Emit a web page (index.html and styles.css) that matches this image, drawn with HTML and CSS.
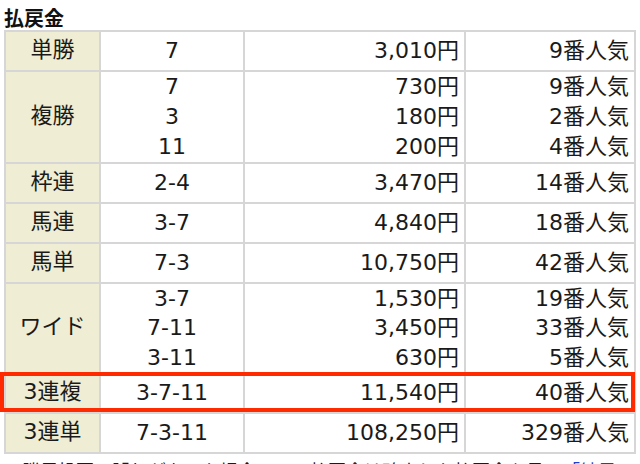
FILE: index.html
```html
<!DOCTYPE html>
<html lang="ja">
<head>
<meta charset="utf-8">
<title>払戻金</title>
<link rel="stylesheet" href="styles.css">
</head>
<body>
<div class="page">
  <h2 class="title">払戻金</h2>
  <div class="tablewrap">
    <table class="pay">
      <colgroup>
        <col class="c1"><col class="c2"><col class="c3"><col class="c4">
      </colgroup>
      <tbody>
        <tr><th>単勝</th><td class="num">7</td><td class="yen">3,010円</td><td class="pop">9番人気</td></tr>
        <tr class="multi"><th>複勝</th><td class="num">7<br>3<br>11</td><td class="yen">730円<br>180円<br>200円</td><td class="pop">9番人気<br>2番人気<br>4番人気</td></tr>
        <tr><th>枠連</th><td class="num">2-4</td><td class="yen">3,470円</td><td class="pop">14番人気</td></tr>
        <tr><th>馬連</th><td class="num">3-7</td><td class="yen">4,840円</td><td class="pop">18番人気</td></tr>
        <tr><th>馬単</th><td class="num">7-3</td><td class="yen">10,750円</td><td class="pop">42番人気</td></tr>
        <tr class="multi tight"><th>ワイド</th><td class="num">3-7<br>7-11<br>3-11</td><td class="yen">1,530円<br>3,450円<br>630円</td><td class="pop">19番人気<br>33番人気<br>5番人気</td></tr>
        <tr><th>3連複</th><td class="num">3-7-11</td><td class="yen">11,540円</td><td class="pop">40番人気</td></tr>
        <tr><th>3連単</th><td class="num">7-3-11</td><td class="yen">108,250円</td><td class="pop">329番人気</td></tr>
      </tbody>
    </table>
    <div class="highlight"></div>
  </div>
  <p class="note">勝馬投票に誤りがあった場合、この払戻金は確定した払戻金を見て<a href="#" class="link">「結果</a></p>
</div>
</body>
</html>
```

FILE: styles.css
```css
html, body {
  margin: 0;
  padding: 0;
  background: #ffffff;
}
.page {
  padding: 0 4px;
  font-family: "DejaVu Sans", "Noto Sans CJK JP", sans-serif;
  color: #1a1a1a;
}
.title {
  margin: 0;
  height: 30px;
  font-family: "Noto Sans CJK JP", sans-serif;
  font-size: 20px;
  font-weight: 700;
  line-height: 35px;
  color: #111;
}
.tablewrap {
  position: relative;
}
.pay {
  border-collapse: collapse;
  table-layout: fixed;
  width: 630px;
  font-size: 22px;
}
.c1 { width: 95px; }
.c2 { width: 144px; }
.c3 { width: 221px; }
.c4 { width: 170px; }
.pay th,
.pay td {
  border: 2px solid #d6d6d6;
  height: 38px;
  padding: 0 5px;
  line-height: 30px;
  vertical-align: middle;
  white-space: nowrap;
}
.pay tr.tight td {
  line-height: 29.33px;
}
.pay th {
  background: #efedd3;
  font-weight: 400;
  text-align: center;
  height: 36px;
  line-height: 28px;
  padding-bottom: 2px;
}
.pay td.num { text-align: center; }
.pay td.yen,
.pay td.pop { text-align: right; }
.highlight {
  position: absolute;
  left: -4px;
  top: 342px;
  width: 627px;
  height: 32px;
  border: 4px solid #ff2a00;
}
.note {
  margin: 4px 0 0 18px;
  font-family: "Noto Sans CJK JP", sans-serif;
  font-size: 18px;
  line-height: 24px;
  white-space: nowrap;
  color: #1a1a1a;
}
.link {
  color: #1a3fd6;
  text-decoration: none;
}
```
